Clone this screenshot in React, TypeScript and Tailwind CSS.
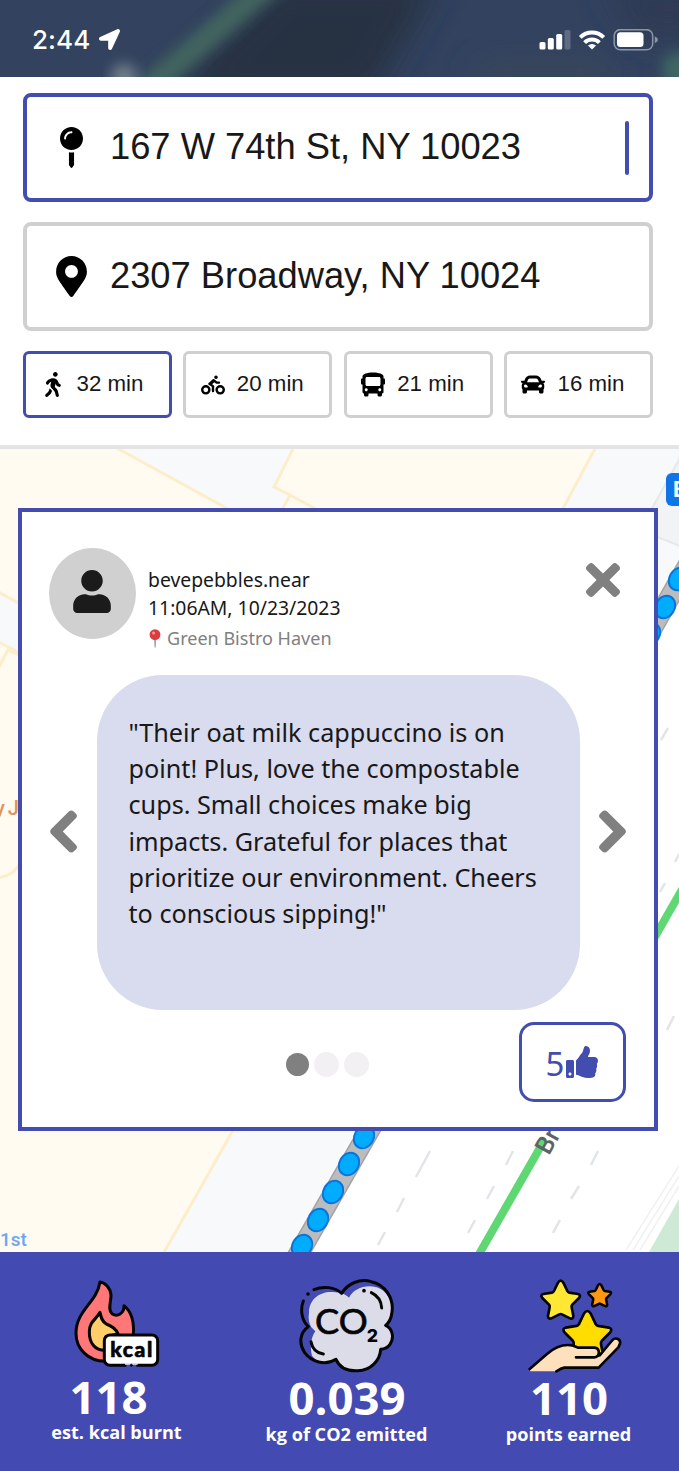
import type { ReactNode } from "react";
import {
  FaBiking,
  FaBus,
  FaCar,
  FaChevronLeft,
  FaChevronRight,
  FaLocationArrow,
  FaMapMarkerAlt,
  FaMapPin,
  FaThumbsUp,
  FaTimes,
  FaUser,
  FaWalking,
} from "react-icons/fa";

function StatusBar() {
  return (
    <header className="relative h-[77px] overflow-hidden bg-[#30405a]">
      <svg className="absolute inset-0" width="679" height="77" viewBox="0 0 679 77" aria-hidden="true">
        <defs>
          <filter id="haze" x="-30%" y="-60%" width="160%" height="220%">
            <feGaussianBlur stdDeviation="16" />
          </filter>
          <filter id="streak" x="-30%" y="-60%" width="160%" height="220%">
            <feGaussianBlur stdDeviation="7" />
          </filter>
        </defs>
        <rect width="679" height="77" fill="#32425f" />
        <path d="M280 -20H440L370 100H160Z" fill="#283243" filter="url(#haze)" />
        <path d="M480 60H610V95H470Z" fill="#38475a" filter="url(#haze)" />
        <path d="M600 -20H700V40H640Z" fill="#2d3b52" filter="url(#haze)" />
        <path d="M140 95L280 -25" stroke="#42655f" strokeWidth="24" filter="url(#streak)" />
        <path d="M205 -6L370 -5" stroke="#4b5868" strokeWidth="14" filter="url(#streak)" />
        <circle cx="124" cy="77" r="13" fill="#73828a" filter="url(#streak)" />
        <circle cx="680" cy="70" r="18" fill="#3f6862" filter="url(#streak)" />
      </svg>
      <div className="relative flex h-[77px] items-center justify-between pr-[21px] pl-8 text-white">
        <div className="flex items-center gap-[9px] pt-0.5">
          <span className="font-[Inter,sans-serif] text-[26px] leading-none font-medium tracking-[0.1px]">2:44</span>
          <FaLocationArrow className="h-[21px] w-[21px]" />
        </div>
        <svg width="120" height="22" viewBox="538 29 120 22" className="mt-0.5" fill="#fff" aria-hidden="true">
          <rect x="539.5" y="42" width="6" height="7.5" rx="1.6" />
          <rect x="547.8" y="38" width="6" height="11.5" rx="1.6" />
          <rect x="556.2" y="34" width="6" height="15.5" rx="1.6" />
          <rect x="564.5" y="30" width="6" height="19.5" rx="1.6" opacity="0.22" />
          <g fill="none" stroke="#fff" strokeWidth="4">
            <path d="M580.3 37.4A16.6 16.6 0 0 1 603.7 37.4" />
            <path d="M584.6 42.6A10.5 10.5 0 0 1 599.4 42.6" />
          </g>
          <path d="M592 49.5L588 45.6A5.9 5.9 0 0 1 596 45.6Z" />
          <rect x="614.2" y="29.7" width="38.5" height="20" rx="6" fill="none" stroke="#fff" strokeOpacity="0.45" strokeWidth="1.5" />
          <rect x="617" y="32.3" width="26.5" height="14.8" rx="3.5" />
          <path d="M654.8 36.3Q658 38 658 39.7T654.8 43.3Z" opacity="0.45" />
        </svg>
      </div>
    </header>
  );
}

function AddressField({ icon, text, active }: { icon: ReactNode; text: string; active?: boolean }) {
  return (
    <div
      className={
        active
          ? "flex h-[109px] items-center rounded-[8px] border-[4.5px] border-[#434db0] bg-white pr-[20px] pl-7"
          : "flex h-[109px] items-center rounded-[8px] border-[4.5px] border-[#d0d0d0] bg-white pr-[20px] pl-7"
      }
    >
      <div className="flex w-8 justify-center">{icon}</div>
      <span className="grow pl-[23px] font-['Liberation_Sans',sans-serif] text-[36.3px] leading-none whitespace-nowrap text-[#181818]">
        {text}
      </span>
      {active && <span className="h-[54px] w-1 rounded-full bg-[#434db0]" />}
    </div>
  );
}

function ModeButton({ icon, text, active }: { icon: ReactNode; text: string; active?: boolean }) {
  return (
    <button
      className={
        active
          ? "flex h-[67px] w-[149px] items-center rounded-[6px] border-[3px] border-[#434db0] pl-[14.5px]"
          : "flex h-[67px] w-[149px] items-center rounded-[6px] border-[3px] border-[#d0d0d0] pl-[14.5px]"
      }
    >
      <span className="flex w-6 justify-center">{icon}</span>
      <span className="pl-3 font-['Liberation_Sans',sans-serif] text-[22.3px] leading-none text-[#181818]">{text}</span>
    </button>
  );
}

function MapBackdrop() {
  const routeDots = [
    [364, 1137],
    [349, 1164],
    [333, 1192],
    [318, 1220],
    [302, 1246],
    [679, 579],
    [665, 607],
    [650, 634],
  ];
  return (
    <svg className="absolute inset-0" width="679" height="803" viewBox="0 449 679 803" aria-hidden="true">
      <rect y="449" width="679" height="803" fill="#fffbf0" />
      <g stroke="#fdeecb" strokeWidth="3">
        <path d="M115 447H294L274 487L290 495L282 510L230 510Z" fill="#f7f9fb" />
        <path d="M288 494L318 510" fill="none" />
        <path d="M597 445L560 514V700H690V445Z" fill="#f7f9fb" />
        <path d="M-5 590L22 605V654L-5 640Z" fill="#f7f9fb" />
        <path d="M-5 674L8 650L22 656" fill="none" />
        <path d="M-3 878C8 877 17 871 20 862" fill="none" />
        <path d="M236 1125L162 1256H400V1120Z" fill="#f7f9fb" />
      </g>
      <path d="M690 440L640 530L690 550Z" fill="#f1f3f4" stroke="#e6e8ea" strokeWidth="2" />
      <path d="M655 600L679 570V1252H298L380 1100H640Z" fill="#fff" />
      <g stroke="#a3a3a3" strokeWidth="21">
        <path d="M380 1112L294 1262M692 558L640 650" />
      </g>
      <g stroke="#bcbcbc" strokeWidth="18">
        <path d="M380 1112L294 1262M692 558L640 650" />
      </g>
      {routeDots.map(([x, y]) => (
        <ellipse key={x} cx={x} cy={y} rx="9.6" ry="11.8" transform={`rotate(30 ${x} ${y})`} fill="#00acfd" stroke="#0b74dc" strokeWidth="2" />
      ))}
      <g stroke="#e2e5e8" strokeWidth="2.5">
        <path d="M430 1151L416 1177M404 1198L397 1212M385 1232L378 1245" />
        <path d="M513 1151L506 1165M494 1186L487 1199M475 1220L468 1233" />
        <path d="M598 1151L591 1165M579 1186L571 1199M560 1220L553 1233" />
        <path d="M674 1016L667 1030M668 728L661 740M679 854L675 862M665 883L660 892" />
      </g>
      <g stroke="#eef2f0" strokeWidth="1.5">
        <path d="M679 1166L626 1250M679 1176L633 1250M679 1186L640 1250" />
      </g>
      <path d="M679 1199V1252H649Z" fill="#ceead6" />
      <path d="M545 1139L478 1256M684 886L652 942" stroke="#5fd873" strokeWidth="8" />
      <text x="549" y="1156" transform="rotate(-61 549 1156)" fontFamily="Roboto, sans-serif" fontSize="25" fontWeight="500" fill="#5f6368">
        Br
      </text>
      <text x="0" y="1246" fontFamily="Roboto, sans-serif" fontSize="19" fontWeight="500" fill="#6aa7f3">
        1st
      </text>
      <text x="-5" y="815" fontFamily="Roboto, sans-serif" fontSize="20" fontWeight="500" letterSpacing="-1" fill="#df925e">
        y J
      </text>
      <rect x="666" y="473" width="30" height="33" rx="6" fill="#0f74e8" />
      <text x="673" y="497" fontFamily="Roboto, sans-serif" fontSize="22" fontWeight="700" fill="#fff">
        B
      </text>
    </svg>
  );
}

function RedPin() {
  return (
    <svg width="12" height="19" viewBox="0 0 12 19" aria-hidden="true">
      <path d="M5 9H7.2L6.7 18.5H5.6Z" fill="#98a0a5" />
      <circle cx="6" cy="5.6" r="5.4" fill="#dc3b40" />
      <circle cx="4.6" cy="4" r="1.5" fill="#f59b9b" />
    </svg>
  );
}

function ReviewCard() {
  return (
    <article className="relative mt-[59px] ml-[18px] h-[623px] w-[640px] border-4 border-[#434db0] bg-white font-['Noto_Sans',sans-serif]">
      <div className="flex h-[163px] pt-9 pr-[34px] pl-[26.5px]">
        <div className="flex h-[91px] w-[87px] items-center justify-center rounded-[50%] bg-[#d0d0d0]">
          <FaUser className="mr-px mb-1 h-[43px] w-[38px] text-[#1b1b1b]" />
        </div>
        <div className="grow pt-[18px] pl-[12.5px] text-[19.35px] leading-7 text-[#181818]">
          <p>bevepebbles.near</p>
          <p>11:06AM, 10/23/2023</p>
          <p className="flex items-center gap-[6px] pt-0.5 pl-px text-[18.05px] text-[#808080]">
            <RedPin />
            Green Bistro Haven
          </p>
        </div>
        <button aria-label="Close" className="mt-[7px] h-[50px] text-[#808080]">
          <FaTimes className="h-[50px] w-[34px]" />
        </button>
      </div>
      <div className="flex items-center pl-[27px]">
        <button aria-label="Previous" className="mt-[-22px] text-[#808080]">
          <FaChevronLeft strokeWidth={28} className="h-[47px] w-[29px] overflow-visible" />
        </button>
        <p className="ml-[19px] h-[335px] w-[483px] rounded-[66px] bg-[#d9dbee] pt-[39px] pl-[31.5px] text-[25.2px] leading-[36.2px] whitespace-pre-line text-[#181818]">
          {`"Their oat milk cappuccino is on
          point! Plus, love the compostable
          cups. Small choices make big
          impacts. Grateful for places that
          prioritize our environment. Cheers
          to conscious sipping!"`}
        </p>
        <button aria-label="Next" className="mt-[-22px] ml-[18px] text-[#808080]">
          <FaChevronRight strokeWidth={28} className="h-[47px] w-[29px] overflow-visible" />
        </button>
      </div>
      <div className="flex justify-end pt-3 pr-7">
        <div className="mt-[30px] mr-[150px] flex h-6 items-center gap-[5px]">
          <span className="h-[23px] w-[23px] rounded-full bg-[#808080]" />
          <span className="h-[25px] w-[25px] rounded-full bg-[#f2f0f2]" />
          <span className="h-[25px] w-[25px] rounded-full bg-[#f2f0f2]" />
        </div>
        <button className="flex h-20 w-[107px] items-center justify-center gap-0.5 rounded-[15px] border-[3.5px] border-[#434db0] pr-px text-[33px] leading-none text-[#434db0]">
          <span className="pt-0.5">5</span>
          <FaThumbsUp className="h-8 w-8" />
        </button>
      </div>
    </article>
  );
}

function FlameIcon() {
  return (
    <svg width="88" height="92" viewBox="100 50 264 276" stroke="#050505" strokeWidth="9" strokeLinejoin="round" strokeLinecap="round" aria-hidden="true">
      <path
        d="M181 65C196 67 212 82 214 104C215 122 203 148 217 160C233 171 254 160 253 136C273 152 284 184 281 224L197 303C146 302 109 267 109 218C109 150 172 126 181 65Z"
        fill="#ff7777"
      />
      <path d="M196 270C166 270 148 248 149 213C150 183 169 178 181 156C184 170 186 183 200 191C214 196 228 205 235 220L198 230Z" fill="#ffcd69" />
      <rect x="194" y="224" width="160" height="91" rx="17" fill="#fff" />
      <path d="M260 315H290" stroke="#434bb2" strokeWidth="10" strokeLinecap="butt" />
      <path d="M256 311H294" stroke="#fff" strokeWidth="4" strokeLinecap="butt" />
      <circle cx="275" cy="315" r="3" fill="#050505" strokeWidth="3" />
      <text x="275" y="291" textAnchor="middle" textLength="126" stroke="#050505" strokeWidth="2" fontFamily="Lato, sans-serif" fontSize="63" fontWeight="900" fill="#050505">
        kcal
      </text>
    </svg>
  );
}

function CloudIcon() {
  return (
    <svg width="98" height="96" viewBox="145 50 294 288" fill="none" stroke="#050505" strokeWidth="9" strokeLinejoin="round" strokeLinecap="round" aria-hidden="true">
      <path
        d="M181 158C181 113 219 90 260 96C280 97 292 104 301 112C313 88 347 72 380 80C416 88 436 128 426 165C424 178 418 188 411 195C432 207 436 232 424 251C417 261 408 266 396 267C394 300 366 331 328 331C296 333 272 321 262 297C236 312 205 307 190 286C184 260 186 233 200 213L188 201C181 189 178 174 181 158Z"
        fill="#dcdce8"
        stroke="none"
      />
      <path d="M196 88C224 76 258 80 279 99C298 69 333 54 368 64C409 73 436 112 430 155C428 174 421 187 411 195C433 206 437 233 424 252C417 262 408 266 396 267C394 300 366 331 328 331C296 333 272 321 262 297C229 318 188 304 168 277C149 249 154 216 179 199C159 180 154 148 164 122" />
      <circle cx="178" cy="101" r="3" fill="#050505" strokeWidth="5" />
      <circle cx="346" cy="91" r="3" fill="#050505" strokeWidth="5" />
      <path d="M368 97C387 106 398 122 399 143M187 244C191 266 204 278 224 281" />
      <g fill="#050505">
        <text x="199" y="221" fontFamily="Lato, sans-serif" fontSize="102" fontWeight="400" textLength="158" lengthAdjust="spacingAndGlyphs" strokeWidth="2">
          CO
        </text>
        <text x="354" y="244" fontFamily="Inter, sans-serif" fontSize="53" fontWeight="800" stroke="none">
          2
        </text>
      </g>
    </svg>
  );
}

function StarsIcon() {
  return (
    <svg width="98" height="96" viewBox="137 50 294 288" stroke="#050505" strokeWidth="8" strokeLinejoin="round" strokeLinecap="round" aria-hidden="true">
      <defs>
        <path
          id="star"
          d="M-8 -52Q0 -64 8 -52L20 -27Q22 -23 26 -22L52 -18Q62 -15 55 -6L35 14Q32 18 33 22L38 47Q38 58 28 55L4 43Q0 41 -4 43L-28 55Q-38 58 -38 47L-33 22Q-32 18 -35 14L-55 -6Q-62 -15 -52 -18L-26 -22Q-22 -23 -20 -27Z"
        />
      </defs>
      <use href="#star" x="241" y="119" fill="#ffe733" />
      <g transform="translate(358 105) scale(0.59)" strokeWidth="13">
        <use href="#star" fill="#ff9811" />
      </g>
      <g transform="translate(321 224) scale(1.24)" strokeWidth="6.5">
        <use href="#star" fill="#ffdd00" />
      </g>
      <path
        d="M148 326L200 281C224 260 250 251 275 255L294 262H342C358 263 362 281 349 290L358 285L394 242C403 228 422 236 419 250L414 261L355 322H252C242 324 235 329 228 333H150Z"
        fill="#ffe0bd"
        stroke="none"
      />
      <path d="M148 326L200 281C224 260 250 251 275 255L294 262H342C360 264 360 289 342 291H287M352 287L358 285L394 242C403 228 422 236 419 250L414 261L355 322H252C242 324 235 329 228 333" fill="none" />
    </svg>
  );
}

function StatsFooter() {
  return (
    <footer className="flex h-[219px] bg-[#434bb2] font-['Open_Sans',sans-serif] font-bold text-white">
      <div className="flex w-[233px] flex-col items-center pt-[25px]">
        <FlameIcon />
        <strong className="mt-0.5 mr-4 text-[45.5px] leading-[50px] font-bold">118</strong>
        <span className="mt-px text-[18.1px] leading-5">est. kcal burnt</span>
      </div>
      <div className="flex w-[226px] flex-col items-center pt-[25px]">
        <CloudIcon />
        <strong className="mt-[-1px] ml-0.5 text-[45.5px] leading-[50px] font-bold">0.039</strong>
        <span className="mt-0.5 ml-px text-[18.1px] leading-5">kg of CO2 emitted</span>
      </div>
      <div className="flex w-[220px] flex-col items-center pt-[25px]">
        <div className="ml-3">
          <StarsIcon />
        </div>
        <strong className="mt-[-1px] text-[45.5px] leading-[50px] font-bold">110</strong>
        <span className="mt-0.5 mr-px text-[18.1px] leading-5">points earned</span>
      </div>
    </footer>
  );
}

export default function App() {
  return (
    <main className="w-[679px] overflow-hidden bg-white">
      <StatusBar />
      <section className="h-[372px] border-b-4 border-[#e4e4e4] bg-white px-[23px] pt-4">
        <div className="flex w-[630px] flex-col gap-5">
          <AddressField active icon={<FaMapPin className="h-[41px] w-[23px]" />} text="167 W 74th St, NY 10023" />
          <AddressField icon={<FaMapMarkerAlt className="h-[41px] w-[31px]" />} text="2307 Broadway, NY 10024" />
          <div className="flex justify-between">
            <ModeButton active icon={<FaWalking className="h-[25px] w-[16px]" />} text="32 min" />
            <ModeButton icon={<FaBiking className="h-5 w-[25px]" />} text="20 min" />
            <ModeButton icon={<FaBus className="h-[25px] w-[25px]" />} text="21 min" />
            <ModeButton icon={<FaCar className="h-[25px] w-[25px]" />} text="16 min" />
          </div>
        </div>
      </section>
      <section className="relative h-[803px] overflow-hidden">
        <MapBackdrop />
        <div className="flex">
          <ReviewCard />
        </div>
      </section>
      <StatsFooter />
    </main>
  );
}
